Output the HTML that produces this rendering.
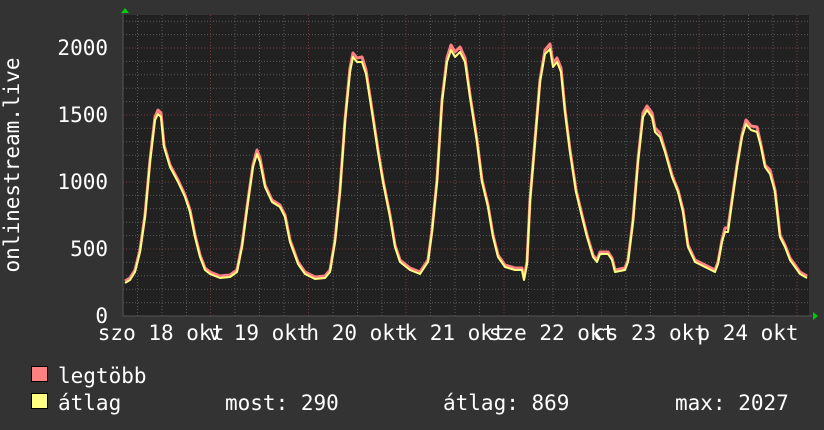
<!DOCTYPE html>
<html><head><meta charset="utf-8"><style>
html,body{margin:0;padding:0;background:#333;}
svg{display:block}
text{font-family:"DejaVu Sans Mono","Liberation Mono",monospace;font-size:21px;fill:#fff}
</style></head><body>
<svg width="824" height="430" viewBox="0 0 824 430" xmlns="http://www.w3.org/2000/svg">
<rect x="0" y="0" width="824" height="430" fill="#333"/>
<rect x="123" y="15" width="686" height="301" fill="#212121"/>
<g stroke="#5a5a5a" stroke-width="1" stroke-dasharray="1,2">
<path d="M123 302.6H809M123 289.2H809M123 275.8H809M123 262.4H809M123 235.6H809M123 222.2H809M123 208.8H809M123 195.4H809M123 168.6H809M123 155.2H809M123 141.8H809M123 128.4H809M123 101.6H809M123 88.2H809M123 74.8H809M123 61.4H809M123 34.6H809M123 21.2H809"/>
<path d="M137.5 15V316M162 15V316M186.5 15V316M235 15V316M259.5 15V316M284 15V316M333 15V316M357.5 15V316M382 15V316M430.5 15V316M455 15V316M479.5 15V316M528.5 15V316M553 15V316M577.5 15V316M626 15V316M650.5 15V316M675 15V316M724 15V316M748.5 15V316M773 15V316"/>
</g>
<g stroke="#7a3a3a" stroke-width="1" stroke-dasharray="1,2">
<path d="M123 249H809M123 182H809M123 115H809M123 48H809"/>
<path d="M210.5 15V316M308.5 15V316M406 15V316M504 15V316M601.5 15V316M699 15V316M797 15V316"/>
</g>
<path d="M123 316H812M123 316V12" stroke="#555" stroke-width="1"/>
<polygon points="125,8 121,13 129,13" fill="#0c0"/>
<polygon points="818,316 813,312 813,320" fill="#0c0"/>
<g fill="none" stroke-linejoin="round">
<polyline id="c" stroke="#ff8080" stroke-width="3" points="125,281 130,278 135,270 140,250 145,215 150,160 155,117 158,110 161,113 164,145 170,165 178,180 185,195 190,210 195,235 200,255 205,268 210,272 220,276 230,275 237,270 242,245 248,200 253,165 257,150 260,158 265,185 272,200 280,205 285,215 290,240 298,262 305,272 315,277 325,276 330,270 335,240 340,190 345,120 350,68 353,53 357,58 362,57 366,70 372,110 378,150 383,180 390,215 395,245 400,260 410,268 420,272 428,260 432,230 437,180 442,100 447,58 451,45 455,52 460,47 465,58 470,95 477,140 482,180 488,205 493,235 498,255 505,265 515,268 522,268 524,278 527,262 530,200 535,140 540,80 545,50 550,44 553,63 557,58 561,68 565,110 570,150 576,190 582,215 587,235 593,255 597,260 600,252 608,252 612,258 615,270 625,268 628,260 633,220 638,160 643,113 647,106 652,113 655,128 660,133 665,150 672,175 678,190 683,210 688,245 695,260 705,265 715,270 718,262 722,240 725,228 728,228 732,200 737,165 742,135 746,120 751,126 757,127 761,145 765,165 770,170 775,190 780,235 785,245 790,258 800,272 807,276"/>
<polyline stroke="#ffff80" stroke-width="2" transform="translate(0,2)" points="125,281 130,278 135,270 140,250 145,215 150,160 155,118 158,112 161,115 164,145 170,165 178,180 185,195 190,210 195,235 200,255 205,268 210,272 220,276 230,275 237,270 242,245 248,200 253,165 257,152 260,160 265,185 272,200 280,205 285,215 290,240 298,262 305,272 315,277 325,276 330,270 335,240 340,190 345,120 350,70 353,55 357,60 362,60 366,72 372,110 378,150 383,180 390,215 395,245 400,260 410,268 420,272 428,260 432,230 437,180 442,100 447,60 451,48 455,55 460,50 465,60 470,95 477,140 482,180 488,205 493,235 498,255 505,265 515,268 522,268 524,278 527,262 530,200 535,140 540,80 545,52 550,47 553,65 557,60 561,70 565,110 570,150 576,190 582,215 587,235 593,255 597,260 600,252 608,252 612,258 615,270 625,268 628,260 633,220 638,160 643,115 647,108 652,115 655,130 660,135 665,150 672,175 678,190 683,210 688,245 695,260 705,265 715,270 718,262 722,240 725,230 728,230 732,200 737,165 742,135 746,122 751,128 757,130 761,145 765,165 770,172 775,190 780,235 785,245 790,258 800,272 807,276"/>
</g>
<g text-anchor="end">
<text x="108" y="55">2000</text>
<text x="108" y="122">1500</text>
<text x="108" y="189">1000</text>
<text x="108" y="256">500</text>
<text x="108" y="323">0</text>
</g>
<text transform="translate(19,165) rotate(-90)" text-anchor="middle">onlinestream.live</text>
<g text-anchor="middle">
<text x="161" y="340">szo 18 okt</text>
<text x="259" y="340">v 19 okt</text>
<text x="357" y="340">h 20 okt</text>
<text x="455" y="340">k 21 okt</text>
<text x="552" y="340">sze 22 okt</text>
<text x="650" y="340">cs 23 okt</text>
<text x="748" y="340">p 24 okt</text>
</g>
<rect x="31.5" y="366.5" width="16" height="15" fill="#ff8080" stroke="#000"/>
<rect x="31.5" y="393.5" width="16" height="15" fill="#ffff80" stroke="#000"/>
<text x="58" y="383">legtöbb</text>
<text x="58" y="410">átlag</text>
<text x="225" y="410">most: 290</text>
<text x="443" y="410">átlag: 869</text>
<text x="675" y="410">max: 2027</text>
</svg>
</body></html>
